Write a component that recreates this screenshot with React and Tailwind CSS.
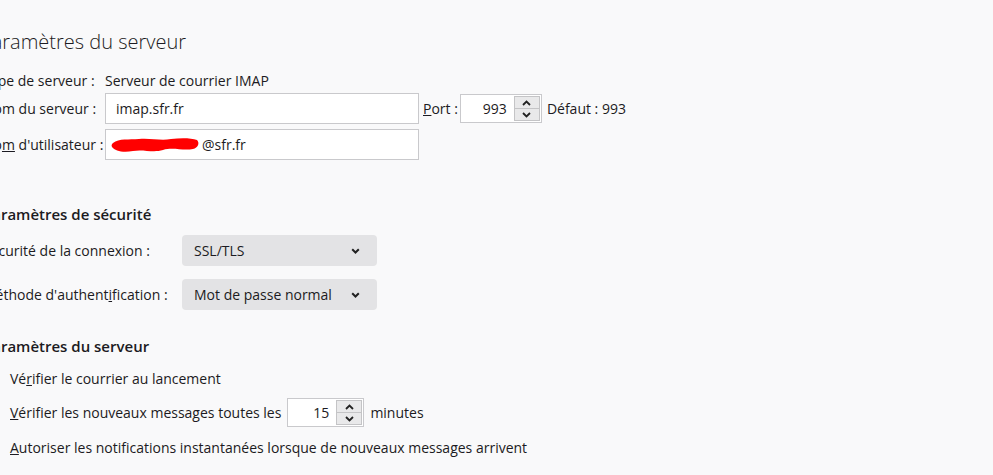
import React from "react";

const Chevron = ({ up }) => (
  <svg width="9" height="6" viewBox="0 0 9 6" className="block">
    <path
      d={up ? "M1 5 L4.5 1.5 L8 5" : "M1 1 L4.5 4.5 L8 1"}
      fill="none"
      stroke="#222"
      strokeWidth="1.8"
    />
  </svg>
);

const SpinInput = ({ value, width }) => (
  <div className={"flex items-stretch h-[29px] bg-white border border-[#c9c9cc] " + width}>
    <div className="flex-1 flex items-center justify-end pr-[7px]">{value}</div>
    <div className="flex flex-col w-[26px] my-[1px] mr-[1px]">
      <div className="flex-1 flex items-center justify-center bg-[#e9e9ea] border border-[#c4c4c6] border-b-0">
        <Chevron up />
      </div>
      <div className="flex-1 flex items-center justify-center bg-[#e9e9ea] border border-[#c4c4c6]">
        <Chevron />
      </div>
    </div>
  </div>
);

const Select = ({ value }) => (
  <div className="flex items-center justify-between w-[195px] h-[31px] rounded-[4px] bg-[#e3e3e5] pl-[12px] pr-[17px]">
    <span>{value}</span>
    <svg width="9" height="6" viewBox="0 0 9 6">
      <path d="M1.2 1.2 L4.5 4.5 L7.8 1.2" fill="none" stroke="#222" strokeWidth="2" />
    </svg>
  </div>
);

export default function App() {
  return (
    <div
      className="w-[993px] h-[475px] overflow-hidden bg-[#f9f9fa] text-[#1c1b22] text-[14px]"
      style={{ fontFamily: '"Open Sans", "Noto Sans", sans-serif' }}
    >
      <div className="ml-[-17px]">
        <h1 className="text-[20px] font-light leading-[28px] pt-[28px] ml-[-3px]">Paramètres du serveur</h1>

        <div className="grid grid-cols-[122px_auto_1fr] items-center mt-[14px]">
          <div className="leading-[20px]">Type de serveur :</div>
          <div className="col-span-2 leading-[20px] pt-[1px]">Serveur de courrier IMAP</div>

          <div className="mt-[2px]">Nom du serveur :</div>
          <div className="flex items-center mt-[2px]">
            <div className="w-[314px] h-[31px] bg-white border border-[#c9c9cc] flex items-center pl-[10px]">
              imap.sfr.fr
            </div>
            <span className="ml-[4px] mr-[2px]">
              <span className="underline">P</span>ort :
            </span>
            <SpinInput value="993" width="w-[82px]" />
            <span className="ml-[5px]">Défaut : 993</span>
          </div>
          <div />

          <div className="mt-[5px]">
            No<span className="underline">m</span> d'utilisateur :
          </div>
          <div className="mt-[5px] w-[314px] h-[31px] bg-white border border-[#c9c9cc] flex items-center pl-[3px]">
            <svg width="92" height="22" viewBox="0 0 92 22" className="shrink-0">
              <path
                d="M4 9 C10 4 20 6 30 5 C42 4 52 7 62 5 C72 4 82 4 88 6 C91 9 89 14 84 15 C74 17 64 13 54 16 C44 19 34 15 24 17 C14 19 6 17 3 13 C2 11 3 10 4 9 Z"
                fill="#ff0000"
              />
            </svg>
            <span className="ml-[1px]">@sfr.fr</span>
          </div>
          <div />
        </div>

        <h2 className="text-[15px] font-semibold leading-[22px] mt-[43px]">Paramètres de sécurité</h2>

        <div className="grid grid-cols-[199px_auto] items-center gap-y-[13px] mt-[10px]">
          <div>Sécurité de la connexion :</div>
          <Select value="SSL/TLS" />
          <div>
            Méthode d'authent<span className="underline">i</span>fication :
          </div>
          <Select value="Mot de passe normal" />
        </div>

        <h2 className="text-[15px] font-semibold leading-[22px] mt-[25px]">Paramètres du serveur</h2>

        <div className="ml-[27px] mt-[12px] flex flex-col">
          <div className="leading-[20px]">
            Vé<span className="underline">r</span>ifier le courrier au lancement
          </div>
          <div className="flex items-center mt-[9px]">
            <span>
              <span className="underline">V</span>érifier les nouveaux messages toutes les
            </span>
            <div className="ml-[6px]">
              <SpinInput value="15" width="w-[77px]" />
            </div>
            <span className="ml-[6px]">minutes</span>
          </div>
          <div className="leading-[20px] mt-[11px]">
            <span className="underline">A</span>utoriser les notifications instantanées lorsque de nouveaux messages arrivent
          </div>
        </div>
      </div>
    </div>
  );
}
